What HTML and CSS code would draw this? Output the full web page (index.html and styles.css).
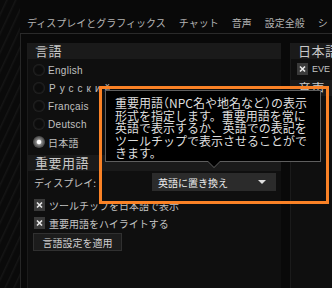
FILE: index.html
```html
<!DOCTYPE html>
<html lang="ja">
<head>
    <meta charset="utf-8">
    <title>設定</title>
    <link rel="stylesheet" href="styles.css">
</head>
<body>
<div class="screen">
    <div class="strip"></div>
    <div class="main">
        <nav class="tabs">
            <span>ディスプレイとグラフィックス</span>
            <span>チャット</span>
            <span>音声</span>
            <span>設定全般</span>
            <span>シ</span>
        </nav>
        <div class="content">
            <section class="panel left">
                <h2 class="panel-head">言語</h2>
                <ul class="radios">
                    <li><span class="radio"></span>English</li>
                    <li class="cyr"><span class="radio"></span>Русский</li>
                    <li><span class="radio"></span>Français</li>
                    <li><span class="radio"></span>Deutsch</li>
                    <li class="jp"><span class="radio on"></span>日本語</li>
                </ul>
                <h2 class="panel-head sub">重要用語</h2>
                <div class="display-row">
                    <span>ディスプレイ:</span>
                    <div class="select">英語に置き換え<span class="caret"></span></div>
                </div>
                <ul class="checks">
                    <li><span class="check"><svg viewBox="0 0 11 12" width="11" height="12"><path d="M3 3.5L8 8.5M8 3.5L3 8.5" stroke="#e8e8e8" stroke-width="1.6"/></svg></span>ツールチップを日本語で表示</li>
                    <li><span class="check"><svg viewBox="0 0 11 12" width="11" height="12"><path d="M3 3.5L8 8.5M8 3.5L3 8.5" stroke="#e8e8e8" stroke-width="1.6"/></svg></span>重要用語をハイライトする</li>
                </ul>
                <button class="apply">言語設定を適用</button>
            </section>
            <section class="panel right">
                <h2 class="panel-head">日本語</h2>
                <ul class="checks eve">
                    <li><span class="check"><svg viewBox="0 0 11 12" width="11" height="12"><path d="M3 3.5L8 8.5M8 3.5L3 8.5" stroke="#e8e8e8" stroke-width="1.6"/></svg></span>EVE</li>
                </ul>
                <h2 class="panel-head">音声</h2>
            </section>
        </div>
    </div>
    <div class="tooltip">
        重要用語<span class="halt">（</span>NPC名や地名など<span class="halt">）</span>の表示<br>
        形式を指定します。重要用語を常に<br>
        英語で表示するか、英語での表記を<br>
        ツールチップで表示させることがで<br>
        きます。
    </div>
    <div class="highlight"></div>
</div>
</body>
</html>
```

FILE: styles.css
```css
body{
    margin: 0;
    padding: 0;
    background: #090909;
    font-family: "Noto Sans CJK JP", "Liberation Sans", sans-serif;
    color: #c4c4c4;
}

.screen{
    position: relative;
    display: flex;
    width: 332px;
    height: 288px;
    overflow: hidden;
}

.strip{
    width: 20px;
    flex-shrink: 0;
    background: repeating-linear-gradient(115deg, #0a0a0a 0px, #0a0a0a 5px, #151515 6px, #0a0a0a 8px);
}

.main{
    flex: 1;
    min-width: 0;
    display: flex;
    flex-direction: column;
}

/* tab bar */
.tabs{
    height: 34px;
    box-sizing: border-box;
    border-bottom: 1px solid #2a2a2a;
    display: flex;
    align-items: flex-end;
    gap: 13px;
    padding: 0 0 4px 7px;
    font-size: 10px;
    line-height: 12px;
    color: #b4b4b4;
    white-space: nowrap;
}

.content{
    flex: 1;
    display: flex;
    gap: 9px;
    padding: 9px 0 0 6px;
    border-left: 1px solid #262626;
}

.panel{
    background: #0f0f0f;
    border-left: 1px solid #1b1b1b;
}
.panel.left{
    width: 254px;
    flex-shrink: 0;
    box-sizing: border-box;
}
.panel.right{
    flex: 1;
    min-width: 0;
    overflow: hidden;
    white-space: nowrap;
}

.panel-head{
    margin: 0;
    height: 16px;
    line-height: 16px;
    padding-left: 7px;
    background: #1a1a1a;
    font-size: 13px;
    font-weight: normal;
    letter-spacing: 0.5px;
    color: #c8c8c8;
    white-space: nowrap;
}
.panel-head.sub{
    margin-top: 4px;
}

ul{
    list-style: none;
    margin: 0;
    padding: 0;
}

/* radio list */
.radios{
    padding-top: 2px;
}
.radios li{
    height: 18px;
    display: flex;
    align-items: center;
    gap: 3px;
    padding-left: 5px;
    font-family: "Liberation Sans", sans-serif;
    font-size: 10px;
    letter-spacing: 0.3px;
    color: #c0c0c0;
}
.radios li.cyr{
    letter-spacing: 4px;
}
.radios li.jp{
    font-family: "Noto Sans CJK JP", sans-serif;
}
.radio{
    width: 12px;
    height: 12px;
    border-radius: 50%;
    background: radial-gradient(circle, #0c0c0c 45%, #262626 72%, #161616 100%);
    flex-shrink: 0;
}
.radios li.cyr .radio{
    margin-right: 1px;
}
.radio.on{
    background: radial-gradient(circle, #ffffff 0 22%, #8a8a8a 32%, #555 60%, #2a2a2a 100%);
}

/* display select row */
.display-row{
    margin-top: 2px;
    height: 18px;
    display: flex;
    align-items: center;
    justify-content: space-between;
    padding: 0 5px 0 6px;
    font-size: 10px;
}
.select{
    width: 124px;
    height: 18px;
    box-sizing: border-box;
    background: #2b2b2b;
    display: flex;
    align-items: center;
    padding: 0 6px;
    color: #ececec;
    font-size: 10px;
}
.caret{
    margin-left: auto;
    margin-right: 4px;
    border-left: 4px solid transparent;
    border-right: 4px solid transparent;
    border-top: 4px solid #e0e0e0;
}

/* checkboxes */
.checks{
    margin-top: 5px;
}
.checks li{
    height: 18px;
    display: flex;
    align-items: center;
    gap: 4px;
    padding-left: 6px;
    font-size: 10px;
    white-space: nowrap;
}
.check{
    width: 11px;
    height: 12px;
    background: #3a3a3a;
    flex-shrink: 0;
    display: flex;
}
.checks.eve{
    margin-top: 1px;
    margin-bottom: 2px;
}
.checks.eve li{
    font-family: "Liberation Sans", sans-serif;
    font-size: 9px;
}

.apply{
    display: block;
    margin: 1px 0 0 5px;
    width: 89px;
    height: 18px;
    padding: 0;
    background: #1c1c1c;
    border: 1px solid #303030;
    color: #cfcfcf;
    font-family: "Noto Sans CJK JP", sans-serif;
    font-size: 10px;
}

/* overlays */
.tooltip{
    position: absolute;
    left: 105px;
    top: 90px;
    width: 216px;
    height: 72px;
    box-sizing: border-box;
    background: #000;
    border: 1px solid #5e5e5e;
    padding: 6px 0 0 9px;
    font-size: 12px;
    line-height: 12.5px;
    color: #dedede;
    white-space: nowrap;
}
.halt{
    font-feature-settings: "halt";
}
.tooltip::before,
.tooltip::after{
    content: "";
    position: absolute;
    left: 102px;
    border-left: 6px solid transparent;
    border-right: 6px solid transparent;
}
.tooltip::before{
    top: 71px;
    border-top: 6px solid #5e5e5e;
}
.tooltip::after{
    top: 70px;
    border-top: 6px solid #000;
}

.highlight{
    position: absolute;
    left: 99px;
    top: 86px;
    width: 230px;
    height: 118px;
    box-sizing: border-box;
    border: 3px solid #fa8226;
}
```
